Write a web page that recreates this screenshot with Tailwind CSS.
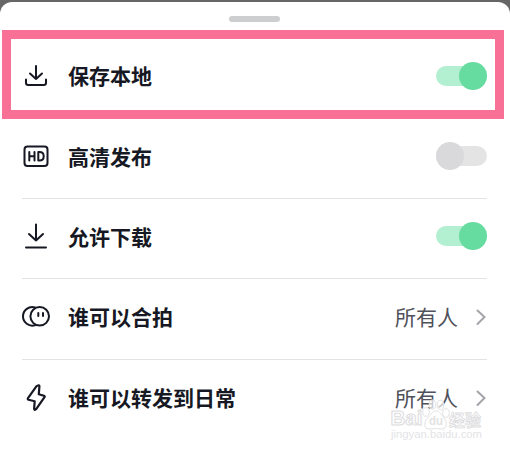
<!DOCTYPE html>
<html lang="zh-CN">
<head>
    <meta charset="UTF-8">
    <meta name="viewport" content="width=device-width, initial-scale=1.0">
    <title>发布设置</title>
    <script src="https://cdn.jsdelivr.net/npm/@tailwindcss/browser@4"></script>
</head>
<body class="bg-[#666666] pt-[2px] overflow-hidden font-['Noto_Sans_CJK_SC',sans-serif]">
    <div class="relative h-[450px] rounded-t-[12px] bg-white pt-[14px]">
        <!-- Drag handle -->
        <div class="mx-auto h-[6px] w-[51px] rounded-full bg-[#cdced0] relative left-[-1px]"></div>

        <!-- Highlight frame -->
        <div class="absolute left-[2px] top-[28px] h-[89px] w-[502px] border-[9px] border-[#f87096]"></div>

        <ul class="mt-[17px] ml-[22px] mr-[23px] text-[21px] leading-none text-[#161823]">
            <li class="flex h-[80px] items-center pb-[7px]">
                <svg class="h-7 w-7 shrink-0" viewBox="0 0 28 28" fill="none" stroke="#161823" stroke-width="2" stroke-linecap="round" stroke-linejoin="round" aria-hidden="true">
                    <path d="M14 4v13M8 11.500l6 5.500 6-5.500M4 17.500v3.300Q4 23 6.200 23H21.800Q24 23 24 20.800V17.500"/>
                </svg>
                <span class="ml-[18px] font-bold">保存本地</span>
                <span class="relative ml-auto mr-[0.5px] flex h-[28px] w-[51px] items-center" role="switch" aria-checked="true">
                    <span class="h-5 w-full rounded-full bg-[#b3efd1]"></span>
                    <span class="absolute right-0 h-[28px] w-[28px] rounded-full bg-[#67dca0]"></span>
                </span>
            </li>
            <li class="flex h-[80px] items-center border-b border-[#e3e3e4] pb-[5px]">
                <svg class="h-7 w-7 shrink-0" viewBox="0 0 28 28" fill="none" stroke="#161823" stroke-width="2" stroke-linecap="round" stroke-linejoin="round" aria-hidden="true">
                    <rect x="2.500" y="4.500" width="23" height="19.500" rx="3"/>
                    <path d="M7.300 10v8.500M12.500 10v8.500M7.300 14.300h5.200M16.300 10v8.500h1.200c2.700 0 4.200-1.500 4.200-4.250s-1.500-4.250-4.200-4.250z"/>
                </svg>
                <span class="ml-[18px] font-bold">高清发布</span>
                <span class="relative ml-auto mr-[0.5px] flex h-[28px] w-[51px] items-center" role="switch" aria-checked="false">
                    <span class="h-5 w-full rounded-full bg-[#e4e4e5]"></span>
                    <span class="absolute left-0 h-[28px] w-[28px] rounded-full bg-[#d9d9dc]"></span>
                </span>
            </li>
            <li class="flex h-[80px] items-center border-b border-[#e3e3e4] pb-[5px]">
                <svg class="h-7 w-7 shrink-0" viewBox="0 0 28 28" fill="none" stroke="#161823" stroke-width="2" stroke-linecap="round" stroke-linejoin="round" aria-hidden="true">
                    <path d="M14 2.500v16M7 12l7 6.500 7-6.500M4 25.500h20"/>
                </svg>
                <span class="ml-[18px] font-bold">允许下载</span>
                <span class="relative ml-auto mr-[0.5px] flex h-[28px] w-[51px] items-center" role="switch" aria-checked="true">
                    <span class="h-5 w-full rounded-full bg-[#b3efd1]"></span>
                    <span class="absolute right-0 h-[28px] w-[28px] rounded-full bg-[#67dca0]"></span>
                </span>
            </li>
            <li class="flex h-[81px] items-center border-b border-[#e3e3e4] pb-[5px]">
                <svg class="h-7 w-7 shrink-0 overflow-visible" viewBox="0 0 28 28" fill="none" stroke="#161823" stroke-width="2" stroke-linecap="round" aria-hidden="true">
                    <circle cx="17.700" cy="13.300" r="9.300"/>
                    <path d="M13 4.400A9.300 9.300 0 1 0 13 22.200"/>
                    <path d="M16.300 10v3M21 10v3" stroke-width="2"/>
                </svg>
                <span class="ml-[18px] font-bold">谁可以合拍</span>
                <span class="ml-auto text-[#50515a]">所有人</span>
                <svg class="ml-[17px] h-5 w-3" viewBox="0 0 12 20" fill="none" stroke="#a3a4a9" stroke-width="2" stroke-linecap="round" aria-hidden="true">
                    <path d="M2.500 3.500 9.500 10l-7 7"/>
                </svg>
            </li>
            <li class="flex h-[80px] items-center pb-[5px]">
                <svg class="h-7 w-7 shrink-0" viewBox="0 0 28 28" fill="none" stroke="#161823" stroke-width="2.200" stroke-linejoin="round" aria-hidden="true">
                    <path d="M16 1.500Q17.500.8 17.400 2.500L16.800 10.200 22 11.800Q23 12.300 22.500 13.200L14 25.300Q12.300 26.800 12.100 25L12.700 17.200 6.500 15.700Q5.300 15.200 6 14.200L14 2.800Q15 1.600 16 1.500Z"/>
                </svg>
                <span class="ml-[18px] font-bold">谁可以转发到日常</span>
                <span class="ml-auto text-[#50515a]">所有人</span>
                <svg class="ml-[17px] h-5 w-3" viewBox="0 0 12 20" fill="none" stroke="#a3a4a9" stroke-width="2" stroke-linecap="round" aria-hidden="true">
                    <path d="M2.500 3.500 9.500 10l-7 7"/>
                </svg>
            </li>
        </ul>

        <!-- Watermark -->
        <svg class="absolute left-[386px] top-[393px] h-[52px] w-[104px]" viewBox="0 0 104 52" fill="#fff" fill-opacity=".7" stroke="#dcdcde" stroke-width="1" aria-hidden="true">
            <text x="4.500" y="30" font-family="Liberation Sans" font-weight="bold" font-size="20" textLength="32" lengthAdjust="spacingAndGlyphs">Bai</text>
            <g stroke="#e2e2e4">
                <ellipse cx="40" cy="17" rx="3.300" ry="4.300"/>
                <ellipse cx="46.500" cy="9.500" rx="3.300" ry="4.600"/>
                <ellipse cx="54.500" cy="10" rx="3.300" ry="4.600"/>
                <ellipse cx="60" cy="18" rx="3.300" ry="4.300"/>
                <path d="M50 16c4 0 5 4 8 7s4 11-2 11c-3 0-4-.5-6.500-.5s-4 .5-6.500.5c-6 0-5-8.500-1-11 3-3 4-7 8-7z"/>
            </g>
            <text x="43" y="30" font-family="Liberation Sans" font-weight="bold" font-size="12" textLength="14" lengthAdjust="spacingAndGlyphs" fill="#e2e2e4" stroke="none" fill-opacity="1">du</text>
            <text x="63" y="31" font-family="Noto Sans CJK SC" font-weight="bold" font-size="16" stroke-width=".8">经验</text>
            <text x="5" y="43" font-family="Liberation Sans" font-size="11" textLength="91" lengthAdjust="spacingAndGlyphs" fill="#e4e4e6" fill-opacity="1" stroke="none">jingyan.baidu.com</text>
        </svg>
    </div>
</body>
</html>
